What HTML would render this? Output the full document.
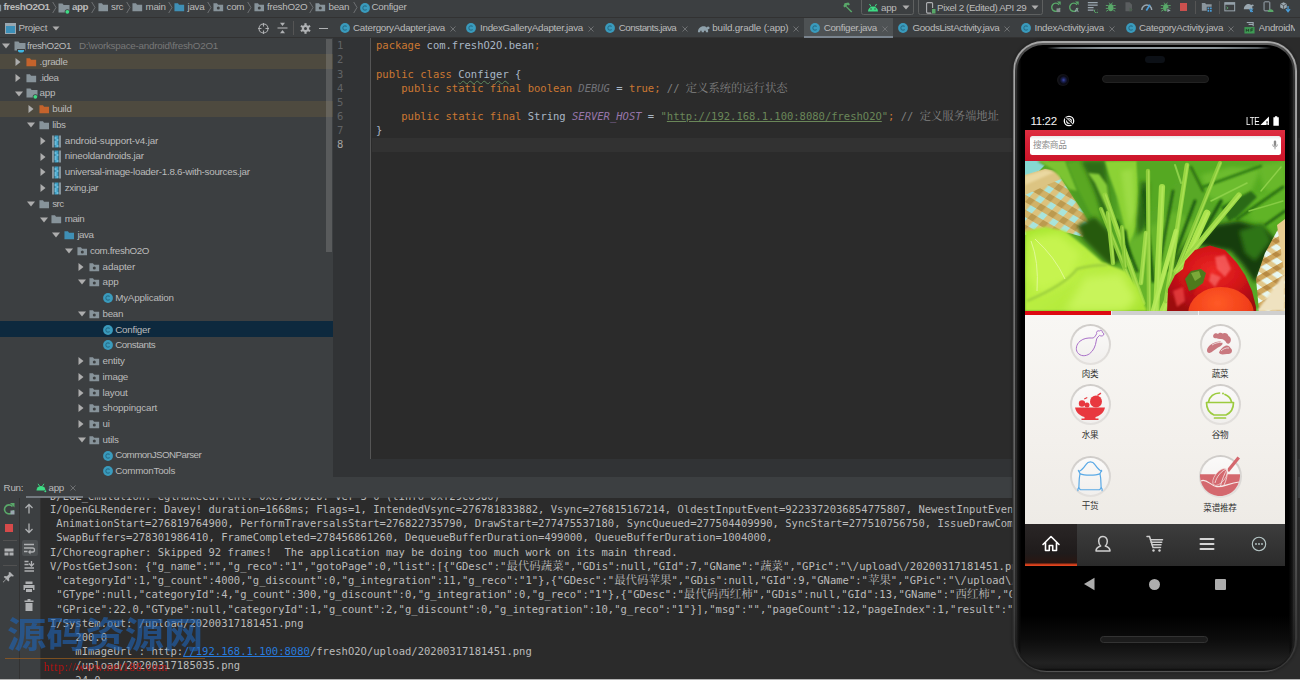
<!DOCTYPE html><html><head><meta charset="utf-8"><title>freshO2O1</title><style>
*{box-sizing:border-box;margin:0;padding:0}
html,body{width:1300px;height:680px;overflow:hidden;background:#3c3f41}
body{position:relative;font-family:"Liberation Sans","Noto Sans CJK SC",sans-serif;font-size:9.8px;letter-spacing:-.27px;color:#bbbbbb}
.abs{position:absolute}
.t{position:absolute;white-space:pre;line-height:16px;height:16px}
.mono{font-family:"DejaVu Sans Mono","Noto Sans CJK SC",monospace;font-size:10.5px;letter-spacing:0}
.row{position:absolute;left:0;width:333px;height:15.74px}
.k{color:#cc7832}.s{color:#6a8759}.c{color:#808080}.f{color:#9876aa;font-style:italic}.n{color:#a9b7c6}
.ln{position:absolute;left:337px;color:#606366;white-space:pre;line-height:14px;height:14px}
.cl{position:absolute;left:376px;color:#a9b7c6;white-space:pre;line-height:14px;height:14px}
.con{position:absolute;left:50px;color:#bbbbbb;white-space:pre;line-height:14px;height:14px;letter-spacing:.017px}
.con .cj{font-size:11.45px}
.lk{color:#287bde;text-decoration:underline}
.cj{font-family:"Noto Serif CJK SC","Noto Sans CJK SC",serif;font-size:11.3px;line-height:0}
</style></head><body>
<div class="abs" style="left:0;top:0;width:1300px;height:18px;background:#3c3f41;border-bottom:1px solid #323232"></div>
<div class="abs" style="left:0;top:18px;width:333px;height:20px;background:#3c3f41;border-bottom:1px solid #323232"></div>
<div class="abs" style="left:333px;top:18px;width:967px;height:20px;background:#3c3f41;border-bottom:1px solid #323232"></div>
<div class="abs" style="left:804px;top:18px;width:89px;height:19.500px;background:#4e5254;border-bottom:2.500px solid #7a848e"></div>
<div class="abs" style="left:0;top:38px;width:333px;height:440px;background:#3c3f41"></div>
<svg class="abs" style="left:-9px;top:2.4px" width="10.6" height="10.6" viewBox="0 0 12 12"><path d="M0.5 1.5h4l1.2 1.5h5.8v7.5h-11z" fill="#87939a"/></svg>
<div class="t" style="left:3.5px;top:-1px;font-weight:bold;letter-spacing:-.45px">freshO2O1</div>
<svg class="abs" style="left:51.5px;top:1px" width="5" height="13" viewBox="0 0 5 13"><path d="M.7 1l3.300 5.500L.7 12" fill="none" stroke="#6e7173" stroke-width="1"/></svg>
<svg class="abs" style="left:58px;top:1.5px" width="13" height="13" viewBox="0 0 13 13"><path d="M0.5 1.5h4l1.2 1.5h5.8v7.5h-11z" fill="#87939a"/><circle cx="9.3" cy="9.8" r="2.6" fill="#3c3f41"/><circle cx="9.3" cy="9.8" r="1.9" fill="#3ddc84"/></svg>
<div class="t" style="left:72px;top:-1px;font-weight:bold;letter-spacing:-.45px">app</div>
<svg class="abs" style="left:91px;top:1px" width="5" height="13" viewBox="0 0 5 13"><path d="M.7 1l3.300 5.500L.7 12" fill="none" stroke="#6e7173" stroke-width="1"/></svg>
<svg class="abs" style="left:97.5px;top:2.4px" width="10.6" height="10.6" viewBox="0 0 12 12"><path d="M0.5 1.5h4l1.2 1.5h5.8v7.5h-11z" fill="#87939a"/></svg>
<div class="t" style="left:111px;top:-1px">src</div>
<svg class="abs" style="left:126px;top:1px" width="5" height="13" viewBox="0 0 5 13"><path d="M.7 1l3.300 5.500L.7 12" fill="none" stroke="#6e7173" stroke-width="1"/></svg>
<svg class="abs" style="left:132px;top:2.4px" width="10.6" height="10.6" viewBox="0 0 12 12"><path d="M0.5 1.5h4l1.2 1.5h5.8v7.5h-11z" fill="#87939a"/></svg>
<div class="t" style="left:145.5px;top:-1px">main</div>
<svg class="abs" style="left:167.5px;top:1px" width="5" height="13" viewBox="0 0 5 13"><path d="M.7 1l3.300 5.500L.7 12" fill="none" stroke="#6e7173" stroke-width="1"/></svg>
<svg class="abs" style="left:174px;top:2.4px" width="10.6" height="10.6" viewBox="0 0 12 12"><path d="M0.5 1.5h4l1.2 1.5h5.8v7.5h-11z" fill="#3f8fb5"/></svg>
<div class="t" style="left:187.5px;top:-1px">java</div>
<svg class="abs" style="left:206.5px;top:1px" width="5" height="13" viewBox="0 0 5 13"><path d="M.7 1l3.300 5.500L.7 12" fill="none" stroke="#6e7173" stroke-width="1"/></svg>
<svg class="abs" style="left:213px;top:2.4px" width="10.6" height="10.6" viewBox="0 0 12 12"><path d="M0.5 1.5h4l1.2 1.5h5.8v7.5h-11z" fill="#87939a"/><circle cx="6" cy="6.8" r="1.7" fill="#3c3f41"/></svg>
<div class="t" style="left:226.5px;top:-1px">com</div>
<svg class="abs" style="left:247px;top:1px" width="5" height="13" viewBox="0 0 5 13"><path d="M.7 1l3.300 5.500L.7 12" fill="none" stroke="#6e7173" stroke-width="1"/></svg>
<svg class="abs" style="left:253.5px;top:2.4px" width="10.6" height="10.6" viewBox="0 0 12 12"><path d="M0.5 1.5h4l1.2 1.5h5.8v7.5h-11z" fill="#87939a"/><circle cx="6" cy="6.8" r="1.7" fill="#3c3f41"/></svg>
<div class="t" style="left:267px;top:-1px">freshO2O</div>
<svg class="abs" style="left:309px;top:1px" width="5" height="13" viewBox="0 0 5 13"><path d="M.7 1l3.300 5.500L.7 12" fill="none" stroke="#6e7173" stroke-width="1"/></svg>
<svg class="abs" style="left:315px;top:2.4px" width="10.6" height="10.6" viewBox="0 0 12 12"><path d="M0.5 1.5h4l1.2 1.5h5.8v7.5h-11z" fill="#87939a"/><circle cx="6" cy="6.8" r="1.7" fill="#3c3f41"/></svg>
<div class="t" style="left:328.5px;top:-1px">bean</div>
<svg class="abs" style="left:352.5px;top:1px" width="5" height="13" viewBox="0 0 5 13"><path d="M.7 1l3.300 5.500L.7 12" fill="none" stroke="#6e7173" stroke-width="1"/></svg>
<svg class="abs" style="left:358.5px;top:1.5px" width="12" height="12" viewBox="0 0 12 12"><circle cx="6" cy="6" r="4.900" fill="#3a9bbd"/><path d="M7.600 4.700A2.100 2.100 0 1 0 7.600 7.300" fill="none" stroke="#28708c" stroke-width="1.100"/></svg>
<div class="t" style="left:371.5px;top:-1px">Configer</div>
<svg class="abs" style="left:4.5px;top:22.500px" width="11" height="11" viewBox="0 0 11 11"><rect x=".5" y=".5" width="10" height="10" fill="#3b8fb8" stroke="#9aa7b0" stroke-width="1"/><rect x=".5" y=".5" width="10" height="2.500" fill="#9aa7b0"/></svg>
<div class="t" style="left:18.5px;top:19.500px">Project</div>
<svg class="abs" style="left:52px;top:26px" width="8" height="5" viewBox="0 0 8 5"><path d="M.5.5h7L4 4.500z" fill="#adadad"/></svg>
<svg class="abs" style="left:257.500px;top:22.500px" width="11" height="11" viewBox="0 0 11 11"><circle cx="5.500" cy="5.500" r="4.500" fill="none" stroke="#afb1b3" stroke-width="1.100"/><path d="M5.500 0v3.500M5.500 7.500V11M0 5.500h3.500M7.500 5.500H11" stroke="#afb1b3" stroke-width="1.100"/></svg>
<svg class="abs" style="left:276.500px;top:22px" width="11" height="12" viewBox="0 0 11 12"><path d="M.5 6h10" stroke="#afb1b3" stroke-width="1.100"/><path d="M3 .8h5L5.500 4z M3 11.200h5L5.500 8z" fill="#afb1b3"/></svg>
<div class="abs" style="left:293px;top:21px;width:1px;height:14px;background:#555"></div>
<svg class="abs" style="left:299.500px;top:22.500px" width="11" height="11" viewBox="-5.500 -5.500 11 11"><g fill="#afb1b3"><circle r="3.600"/><rect x="-1.100" y="-5.300" width="2.200" height="10.600"/><rect x="-1.100" y="-5.300" width="2.200" height="10.600" transform="rotate(60)"/><rect x="-1.100" y="-5.300" width="2.200" height="10.600" transform="rotate(120)"/></g><circle r="1.500" fill="#3c3f41"/></svg>
<div class="abs" style="left:318.500px;top:27.500px;width:9px;height:1.500px;background:#afb1b3"></div>
<svg class="abs" style="left:338.5px;top:22.3px" width="12" height="12" viewBox="0 0 12 12"><circle cx="6" cy="6" r="4.900" fill="#3a9bbd"/><path d="M7.600 4.700A2.100 2.100 0 1 0 7.600 7.300" fill="none" stroke="#28708c" stroke-width="1.100"/></svg>
<div class="t" style="left:353px;top:20.300px;letter-spacing:-0.26px">CatergoryAdapter.java</div>
<svg class="abs" style="left:450px;top:25.500px" width="6" height="6" viewBox="0 0 6 6"><path d="M.5.5l5 5M5.500.5l-5 5" stroke="#6e7072" stroke-width="1"/></svg>
<svg class="abs" style="left:464.5px;top:22.3px" width="12" height="12" viewBox="0 0 12 12"><circle cx="6" cy="6" r="4.900" fill="#3a9bbd"/><path d="M7.600 4.700A2.100 2.100 0 1 0 7.600 7.300" fill="none" stroke="#28708c" stroke-width="1.100"/></svg>
<div class="t" style="left:480px;top:20.300px;letter-spacing:-0.27px">IndexGalleryAdapter.java</div>
<svg class="abs" style="left:588px;top:25.500px" width="6" height="6" viewBox="0 0 6 6"><path d="M.5.5l5 5M5.500.5l-5 5" stroke="#6e7072" stroke-width="1"/></svg>
<svg class="abs" style="left:603.8px;top:22.3px" width="12" height="12" viewBox="0 0 12 12"><circle cx="6" cy="6" r="4.900" fill="#3a9bbd"/><path d="M7.600 4.700A2.100 2.100 0 1 0 7.600 7.300" fill="none" stroke="#28708c" stroke-width="1.100"/></svg>
<div class="t" style="left:618.7px;top:20.300px;letter-spacing:-0.52px">Constants.java</div>
<svg class="abs" style="left:682px;top:25.500px" width="6" height="6" viewBox="0 0 6 6"><path d="M.5.5l5 5M5.500.5l-5 5" stroke="#6e7072" stroke-width="1"/></svg>
<svg class="abs" style="left:696.8px;top:23.500px" width="13" height="10" viewBox="0 0 14 10"><path d="M1 8.500c0-4 2.500-6.500 6-6.500 1.500 0 2.500.5 3.500 1.500.5-1.500 2.500-1.500 3 0 .3 1.500-1 2-2 1.500.5 1 .5 2.500.5 3.500h-2.500v-1.500h-2v1.500h-2.500v-1.500h-1.500v1.500z" fill="#8fa1ab"/></svg>
<div class="t" style="left:712.3px;top:20.300px;letter-spacing:-0.15px">build.gradle (:app)</div>
<svg class="abs" style="left:793px;top:25.500px" width="6" height="6" viewBox="0 0 6 6"><path d="M.5.5l5 5M5.500.5l-5 5" stroke="#6e7072" stroke-width="1"/></svg>
<svg class="abs" style="left:808.7px;top:22.3px" width="12" height="12" viewBox="0 0 12 12"><circle cx="6" cy="6" r="4.900" fill="#3a9bbd"/><path d="M7.600 4.700A2.100 2.100 0 1 0 7.600 7.300" fill="none" stroke="#28708c" stroke-width="1.100"/></svg>
<div class="t" style="left:823.7px;top:20.300px;letter-spacing:-0.30px">Configer.java</div>
<svg class="abs" style="left:881.9px;top:25.500px" width="6" height="6" viewBox="0 0 6 6"><path d="M.5.5l5 5M5.500.5l-5 5" stroke="#6e7072" stroke-width="1"/></svg>
<svg class="abs" style="left:897.3px;top:22.3px" width="12" height="12" viewBox="0 0 12 12"><circle cx="6" cy="6" r="4.900" fill="#3a9bbd"/><path d="M7.600 4.700A2.100 2.100 0 1 0 7.600 7.300" fill="none" stroke="#28708c" stroke-width="1.100"/></svg>
<div class="t" style="left:912.5px;top:20.300px;letter-spacing:-0.38px">GoodsListActivity.java</div>
<svg class="abs" style="left:1004.4px;top:25.500px" width="6" height="6" viewBox="0 0 6 6"><path d="M.5.5l5 5M5.500.5l-5 5" stroke="#6e7072" stroke-width="1"/></svg>
<svg class="abs" style="left:1020px;top:22.3px" width="12" height="12" viewBox="0 0 12 12"><circle cx="6" cy="6" r="4.900" fill="#3a9bbd"/><path d="M7.600 4.700A2.100 2.100 0 1 0 7.600 7.300" fill="none" stroke="#28708c" stroke-width="1.100"/></svg>
<div class="t" style="left:1034.6px;top:20.300px;letter-spacing:-0.32px">IndexActivity.java</div>
<svg class="abs" style="left:1109px;top:25.500px" width="6" height="6" viewBox="0 0 6 6"><path d="M.5.5l5 5M5.500.5l-5 5" stroke="#6e7072" stroke-width="1"/></svg>
<svg class="abs" style="left:1124.9px;top:22.3px" width="12" height="12" viewBox="0 0 12 12"><circle cx="6" cy="6" r="4.900" fill="#3a9bbd"/><path d="M7.600 4.700A2.100 2.100 0 1 0 7.600 7.300" fill="none" stroke="#28708c" stroke-width="1.100"/></svg>
<div class="t" style="left:1139px;top:20.300px;letter-spacing:-0.32px">CategoryActivity.java</div>
<svg class="abs" style="left:1227.8px;top:25.500px" width="6" height="6" viewBox="0 0 6 6"><path d="M.5.5l5 5M5.500.5l-5 5" stroke="#6e7072" stroke-width="1"/></svg>
<svg class="abs" style="left:1243.8px;top:22px" width="11" height="12" viewBox="0 0 12 13"><path d="M3 .5h7v4M5 2.500h5" stroke="#9aa7b0" stroke-width="1.200" fill="none"/><rect x=".5" y="5.500" width="11" height="7" fill="#3e9a54"/><path d="M2.500 7.500v3M2.500 9h2.500M5 7.500v3M7.500 10.500v-3h2.500M7.500 9h2" stroke="#1e3a24" stroke-width=".9" fill="none"/></svg>
<div class="t" style="left:1258.5px;top:20.300px;width:36.5px;overflow:hidden;letter-spacing:-0.30px">AndroidManifest.xml</div>
<svg class="abs" style="left:842px;top:1.500px" width="12" height="11" viewBox="0 0 14 14"><path d="M2.500 1.500l5-1 2 2.500-1.500 1.500-1.500-1L5 5l7.500 7-1.500 1.500L4 6 2.500 7 1 5l1-1.500z" fill="#59a869"/></svg>
<div class="abs" style="left:861px;top:-4px;width:53px;height:19px;border:1px solid #5e6060;border-radius:2.500px"></div>
<svg class="abs" style="left:867px;top:3px" width="12" height="10" viewBox="0 0 12 10"><path d="M1 8.500a5 5 0 0 1 10 0z" fill="#3ddc84"/><path d="M2.500 1l1.500 2.500M9.500 1L8 3.500" stroke="#3ddc84" stroke-width="1"/><circle cx="4" cy="6" r=".7" fill="#3c3f41"/><circle cx="8" cy="6" r=".7" fill="#3c3f41"/></svg>
<div class="t" style="left:881px;top:-.5px">app</div>
<svg class="abs" style="left:901.500px;top:5px" width="8" height="5" viewBox="0 0 8 5"><path d="M.5.5h7L4 4.500z" fill="#adadad"/></svg>
<div class="abs" style="left:918px;top:-4px;width:125px;height:19px;border:1px solid #5e6060;border-radius:2.500px"></div>
<svg class="abs" style="left:925.500px;top:2px" width="10" height="12" viewBox="0 0 10 12"><rect x=".6" y=".6" width="6" height="10.500" rx="1" fill="none" stroke="#afb1b3" stroke-width="1.100"/><rect x="5" y="6" width="4.500" height="5.500" fill="#3c3f41"/><rect x="6" y="7" width="3.500" height="4.500" fill="#59a869"/></svg>
<div class="t" style="left:937px;top:-.5px;letter-spacing:-0.38px">Pixel 2 (Edited) API 29</div>
<svg class="abs" style="left:1031px;top:5px" width="8" height="5" viewBox="0 0 8 5"><path d="M.5.5h7L4 4.500z" fill="#adadad"/></svg>
<svg class="abs" style="left:1049.85px;top:1.300px" width="11.5" height="11.5" viewBox="-7 -7 14 14"><path d="M4-2.500A5 5 0 1 0 5 1.500" fill="none" stroke="#59a869" stroke-width="1.700"/><path d="M1.500-6.500h4.500v4.500z" fill="#59a869"/><rect x="1" y="2" width="4.500" height="4.500" fill="#8a8f92"/></svg>
<svg class="abs" style="left:1068.25px;top:1.300px" width="11.5" height="11.5" viewBox="-7 -7 14 14"><path d="M4-2.500A5 5 0 1 0 5 1.500" fill="none" stroke="#59a869" stroke-width="1.700"/><path d="M1.500-6.500h4.500v4.500z" fill="#59a869"/><path d="M1.500 6.500l2-5 2 5M2.300 5h2.400" stroke="#9aa7b0" stroke-width="1" fill="none"/></svg>
<svg class="abs" style="left:1086.85px;top:1.300px" width="11.5" height="11.5" viewBox="-7 -7 14 14"><path d="M-6-5h12M-6-2h12M-6 1h7M-6 4h7" stroke="#9aa7b0" stroke-width="1.500"/><path d="M2.500 3.500a2.500 2.500 0 1 0 4 0" fill="none" stroke="#59a869" stroke-width="1.200"/></svg>
<svg class="abs" style="left:1104.65px;top:1.300px" width="11.5" height="11.5" viewBox="-7 -7 14 14"><ellipse cx="0" cy="1" rx="3.300" ry="4.500" fill="#59a869"/><path d="M-2-5l1.500 2M2-5L.5-3M-6-1.500h3M6-1.500H3M-6 2h3M6 2H3M-5.500 5.500l2.500-1.500M5.500 5.500L3 4" stroke="#59a869" stroke-width="1.100"/></svg>
<svg class="abs" style="left:1122.85px;top:1.300px" width="11.5" height="11.5" viewBox="-7 -7 14 14"><path d="M-4-5.500h5l3 3V5.500h-8z" fill="#5a5d5f"/><path d="M1 1l4 2.500-4 2.500z" fill="#4a5e4e"/></svg>
<svg class="abs" style="left:1141.25px;top:1.300px" width="11.5" height="11.5" viewBox="-7 -7 14 14"><path d="M-6 4a6 6 0 1 1 12 0" fill="none" stroke="#9aa7b0" stroke-width="1.800"/><path d="M-.5 4.500L4-2.500" stroke="#4a9eda" stroke-width="2"/></svg>
<svg class="abs" style="left:1160.25px;top:1.300px" width="11.5" height="11.5" viewBox="-7 -7 14 14"><ellipse cx="0" cy="1" rx="3.300" ry="4.500" fill="#59a869"/><path d="M-2-5l1.500 2M2-5L.5-3M-6-1.500h3M6-1.500H3M-6 2h3M6 2H3M-5.500 5.500l2.500-1.500M5.500 5.500L3 4" stroke="#59a869" stroke-width="1.100"/><path d="M1 2h5v4.500h-5z" fill="#3c3f41"/><path d="M2 2.500l4 2-4 2z" fill="#9aa7b0"/></svg>
<div class="abs" style="left:1179.800px;top:3px;width:7.600px;height:7.600px;background:#c9504e"></div>
<div class="abs" style="left:1195px;top:1px;width:1px;height:13px;background:#555"></div>
<svg class="abs" style="left:1201.25px;top:1.300px" width="11.5" height="11.5" viewBox="-7 -7 14 14"><path d="M-6-4.500h4l1.200 1.500h6.800v8h-12z" fill="#8a959c"/><rect x="0" y="0" width="6.500" height="6" fill="#3c3f41"/><path d="M1 1h2v2h-2zM4 1h2v2h-2zM1 4h2v2h-2zM4 4h2v2h-2z" fill="#4a9eda"/></svg>
<div class="abs" style="left:1218.500px;top:1px;width:1px;height:13px;background:#555"></div>
<svg class="abs" style="left:1224.25px;top:1.300px" width="11.5" height="11.5" viewBox="-7 -7 14 14"><rect x="-6" y="-5" width="12" height="10" fill="none" stroke="#9aa7b0" stroke-width="1.200"/><path d="M-6-3.500h12" stroke="#9aa7b0" stroke-width="2"/><path d="M-4 0l2 1.500-2 1.500" fill="none" stroke="#59a869" stroke-width="1"/></svg>
<svg class="abs" style="left:1243.25px;top:1.300px" width="11.5" height="11.5" viewBox="-7 -7 14 14"><path d="M-6 3c0-4 3-6.500 6-6.500 1 0 2 .5 3 1.500.5-1 2.500-1 3 0 .3 1.500-1 2-2 1.500.5 1 .5 2.500.5 3.500z" fill="#9aa7b0"/><path d="M2 6.500l3-4.500M5 6.500l-3-4.500" stroke="#4a9eda" stroke-width="1.200"/><path d="M1 3l2.500 3.500" stroke="#4a9eda" stroke-width="1.400"/></svg>
<svg class="abs" style="left:1262.25px;top:1.300px" width="11.5" height="11.5" viewBox="-7 -7 14 14"><rect x="-4.500" y="-6" width="7" height="11" rx="1" fill="none" stroke="#9aa7b0" stroke-width="1.200"/><path d="M0 6.500a3.500 3.500 0 0 1 7 0z" fill="#59a869"/></svg>
<svg class="abs" style="left:1279.25px;top:1.300px" width="11.5" height="11.5" viewBox="-7 -7 14 14"><path d="M-5.500-3.500l4-2 4 2v4.500l-4 2-4-2z" fill="#9aa7b0"/><path d="M-1.500-1.500v5M-5.500-3.500l4 2 4-2" stroke="#3c3f41" stroke-width=".8" fill="none"/><path d="M4-1v6M1.500 3l2.500 3 2.500-3" stroke="#4a9eda" stroke-width="1.500" fill="none"/></svg>
<svg class="abs" style="left:1.0px;top:42.37px" width="10" height="8" viewBox="0 0 10 8"><path d="M1 1.500h8l-4 5z" fill="#adadad"/></svg>
<svg class="abs" style="left:13.5px;top:40.269999999999996px" width="14" height="14" viewBox="0 0 14 14"><path d="M0.5 1.5h4l1.2 1.5h5.8v7.5h-11z" fill="#87939a"/><path d="M3 9h8v1.5a2.5 2.5 0 0 1-2.5 2.5h-3a2.5 2.5 0 0 1-2.5-2.500z" fill="#3c3f41"/><path d="M4 10h6v.8a1.8 1.800 0 0 1-1.800 1.800h-2.400a1.800 1.800 0 0 1-1.800-1.800z" fill="#40b6e0"/></svg>
<div class="t" style="left:27.0px;top:38.2px;color:#bbbbbb;letter-spacing:-0.44px">freshO2O1</div>
<div class="t" style="left:79px;top:38.2px;color:#787878;letter-spacing:-0.23px">D:\workspace-android\freshO2O1</div>
<div class="row" style="top:53.7px;background:#4e4a3f"></div>
<svg class="abs" style="left:14.1px;top:57.11px" width="8" height="10" viewBox="0 0 8 10"><path d="M1.500 1l5 4-5 4z" fill="#adadad"/></svg>
<svg class="abs" style="left:26.1px;top:56.91px" width="10.6" height="10.6" viewBox="0 0 12 12"><path d="M0.5 1.5h4l1.2 1.5h5.8v7.5h-11z" fill="#c4632c"/></svg>
<div class="t" style="left:39.6px;top:53.9px;color:#bbbbbb;letter-spacing:-0.28px">.gradle</div>
<svg class="abs" style="left:14.1px;top:72.85000000000001px" width="8" height="10" viewBox="0 0 8 10"><path d="M1.500 1l5 4-5 4z" fill="#adadad"/></svg>
<svg class="abs" style="left:26.1px;top:72.65000000000002px" width="10.6" height="10.6" viewBox="0 0 12 12"><path d="M0.5 1.5h4l1.2 1.5h5.8v7.5h-11z" fill="#87939a"/></svg>
<div class="t" style="left:39.6px;top:69.7px;color:#bbbbbb;letter-spacing:-0.45px">.idea</div>
<svg class="abs" style="left:13.6px;top:89.59px" width="10" height="8" viewBox="0 0 10 8"><path d="M1 1.500h8l-4 5z" fill="#adadad"/></svg>
<svg class="abs" style="left:26.1px;top:87.49000000000001px" width="13" height="13" viewBox="0 0 13 13"><path d="M0.5 1.5h4l1.2 1.5h5.8v7.5h-11z" fill="#87939a"/><circle cx="9.3" cy="9.8" r="2.6" fill="#3c3f41"/><circle cx="9.3" cy="9.8" r="1.9" fill="#3ddc84"/></svg>
<div class="t" style="left:39.6px;top:85.4px;color:#bbbbbb;letter-spacing:-0.28px">app</div>
<div class="row" style="top:101.0px;background:#4e4a3f"></div>
<svg class="abs" style="left:26.7px;top:104.33000000000001px" width="8" height="10" viewBox="0 0 8 10"><path d="M1.500 1l5 4-5 4z" fill="#adadad"/></svg>
<svg class="abs" style="left:38.7px;top:104.13000000000002px" width="10.6" height="10.6" viewBox="0 0 12 12"><path d="M0.5 1.5h4l1.2 1.5h5.8v7.5h-11z" fill="#c4632c"/></svg>
<div class="t" style="left:52.2px;top:101.1px;color:#bbbbbb;letter-spacing:-0.24px">build</div>
<svg class="abs" style="left:26.2px;top:121.07000000000001px" width="10" height="8" viewBox="0 0 10 8"><path d="M1 1.500h8l-4 5z" fill="#adadad"/></svg>
<svg class="abs" style="left:38.7px;top:119.87000000000002px" width="10.6" height="10.6" viewBox="0 0 12 12"><path d="M0.5 1.5h4l1.2 1.5h5.8v7.5h-11z" fill="#87939a"/></svg>
<div class="t" style="left:52.2px;top:116.9px;color:#bbbbbb;letter-spacing:-0.30px">libs</div>
<svg class="abs" style="left:39.3px;top:135.81px" width="8" height="10" viewBox="0 0 8 10"><path d="M1.500 1l5 4-5 4z" fill="#adadad"/></svg>
<svg class="abs" style="left:51.3px;top:134.71px" width="12" height="13" viewBox="0 0 12 13"><rect x="1" y="0.500" width="2" height="12" fill="#87939a"/><rect x="8" y="0.500" width="2" height="12" fill="#87939a"/><rect x="3.500" y="0.500" width="4" height="12" fill="#3f9fc4"/><path d="M3.500 2h2v2h2v2h-2v2h-2v-2h2v-2h-2zM3.500 8h2v2h2v2h-2v-2h-2z" fill="#8fd3ee" opacity=".55"/></svg>
<div class="t" style="left:64.8px;top:132.6px;color:#bbbbbb;letter-spacing:-0.11px">android-support-v4.jar</div>
<svg class="abs" style="left:39.3px;top:151.55px" width="8" height="10" viewBox="0 0 8 10"><path d="M1.500 1l5 4-5 4z" fill="#adadad"/></svg>
<svg class="abs" style="left:51.3px;top:150.45000000000002px" width="12" height="13" viewBox="0 0 12 13"><rect x="1" y="0.500" width="2" height="12" fill="#87939a"/><rect x="8" y="0.500" width="2" height="12" fill="#87939a"/><rect x="3.500" y="0.500" width="4" height="12" fill="#3f9fc4"/><path d="M3.500 2h2v2h2v2h-2v2h-2v-2h2v-2h-2zM3.500 8h2v2h2v2h-2v-2h-2z" fill="#8fd3ee" opacity=".55"/></svg>
<div class="t" style="left:64.8px;top:148.4px;color:#bbbbbb;letter-spacing:-0.20px">nineoldandroids.jar</div>
<svg class="abs" style="left:39.3px;top:167.29000000000002px" width="8" height="10" viewBox="0 0 8 10"><path d="M1.500 1l5 4-5 4z" fill="#adadad"/></svg>
<svg class="abs" style="left:51.3px;top:166.19000000000003px" width="12" height="13" viewBox="0 0 12 13"><rect x="1" y="0.500" width="2" height="12" fill="#87939a"/><rect x="8" y="0.500" width="2" height="12" fill="#87939a"/><rect x="3.500" y="0.500" width="4" height="12" fill="#3f9fc4"/><path d="M3.500 2h2v2h2v2h-2v2h-2v-2h2v-2h-2zM3.500 8h2v2h2v2h-2v-2h-2z" fill="#8fd3ee" opacity=".55"/></svg>
<div class="t" style="left:64.8px;top:164.1px;color:#bbbbbb;letter-spacing:-0.26px">universal-image-loader-1.8.6-with-sources.jar</div>
<svg class="abs" style="left:39.3px;top:183.03px" width="8" height="10" viewBox="0 0 8 10"><path d="M1.500 1l5 4-5 4z" fill="#adadad"/></svg>
<svg class="abs" style="left:51.3px;top:181.93px" width="12" height="13" viewBox="0 0 12 13"><rect x="1" y="0.500" width="2" height="12" fill="#87939a"/><rect x="8" y="0.500" width="2" height="12" fill="#87939a"/><rect x="3.500" y="0.500" width="4" height="12" fill="#3f9fc4"/><path d="M3.500 2h2v2h2v2h-2v2h-2v-2h2v-2h-2zM3.500 8h2v2h2v2h-2v-2h-2z" fill="#8fd3ee" opacity=".55"/></svg>
<div class="t" style="left:64.8px;top:179.8px;color:#bbbbbb;letter-spacing:-0.33px">zxing.jar</div>
<svg class="abs" style="left:26.2px;top:199.77px" width="10" height="8" viewBox="0 0 10 8"><path d="M1 1.500h8l-4 5z" fill="#adadad"/></svg>
<svg class="abs" style="left:38.7px;top:198.57000000000002px" width="10.6" height="10.6" viewBox="0 0 12 12"><path d="M0.5 1.5h4l1.2 1.5h5.8v7.5h-11z" fill="#87939a"/></svg>
<div class="t" style="left:52.2px;top:195.6px;color:#bbbbbb;letter-spacing:-0.52px">src</div>
<svg class="abs" style="left:38.8px;top:215.51000000000002px" width="10" height="8" viewBox="0 0 10 8"><path d="M1 1.500h8l-4 5z" fill="#adadad"/></svg>
<svg class="abs" style="left:51.3px;top:214.31000000000003px" width="10.6" height="10.6" viewBox="0 0 12 12"><path d="M0.5 1.5h4l1.2 1.5h5.8v7.5h-11z" fill="#87939a"/></svg>
<div class="t" style="left:64.8px;top:211.3px;color:#bbbbbb;letter-spacing:-0.43px">main</div>
<svg class="abs" style="left:51.4px;top:231.25px" width="10" height="8" viewBox="0 0 10 8"><path d="M1 1.500h8l-4 5z" fill="#adadad"/></svg>
<svg class="abs" style="left:63.9px;top:230.05px" width="10.6" height="10.6" viewBox="0 0 12 12"><path d="M0.5 1.5h4l1.2 1.5h5.8v7.5h-11z" fill="#3f8fb5"/></svg>
<div class="t" style="left:77.4px;top:227.1px;color:#bbbbbb;letter-spacing:-0.49px">java</div>
<svg class="abs" style="left:64.0px;top:246.99px" width="10" height="8" viewBox="0 0 10 8"><path d="M1 1.500h8l-4 5z" fill="#adadad"/></svg>
<svg class="abs" style="left:76.5px;top:245.79000000000002px" width="10.6" height="10.6" viewBox="0 0 12 12"><path d="M0.5 1.5h4l1.2 1.5h5.8v7.5h-11z" fill="#87939a"/><circle cx="6" cy="6.8" r="1.7" fill="#3c3f41"/></svg>
<div class="t" style="left:90.0px;top:242.8px;color:#bbbbbb;letter-spacing:-0.39px">com.freshO2O</div>
<svg class="abs" style="left:77.1px;top:261.73px" width="8" height="10" viewBox="0 0 8 10"><path d="M1.500 1l5 4-5 4z" fill="#adadad"/></svg>
<svg class="abs" style="left:89.1px;top:261.53px" width="10.6" height="10.6" viewBox="0 0 12 12"><path d="M0.5 1.5h4l1.2 1.5h5.8v7.5h-11z" fill="#87939a"/><circle cx="6" cy="6.8" r="1.7" fill="#3c3f41"/></svg>
<div class="t" style="left:102.6px;top:258.5px;color:#bbbbbb;letter-spacing:-0.10px">adapter</div>
<svg class="abs" style="left:76.6px;top:278.47px" width="10" height="8" viewBox="0 0 10 8"><path d="M1 1.500h8l-4 5z" fill="#adadad"/></svg>
<svg class="abs" style="left:89.1px;top:277.27px" width="10.6" height="10.6" viewBox="0 0 12 12"><path d="M0.5 1.5h4l1.2 1.5h5.8v7.5h-11z" fill="#87939a"/><circle cx="6" cy="6.8" r="1.7" fill="#3c3f41"/></svg>
<div class="t" style="left:102.6px;top:274.3px;color:#bbbbbb;letter-spacing:-0.12px">app</div>
<svg class="abs" style="left:101.7px;top:292.11px" width="12" height="12" viewBox="0 0 12 12"><circle cx="6" cy="6" r="4.900" fill="#3a9bbd"/><path d="M7.600 4.700A2.100 2.100 0 1 0 7.600 7.300" fill="none" stroke="#28708c" stroke-width="1.100"/></svg>
<div class="t" style="left:115.2px;top:290.0px;color:#bbbbbb;letter-spacing:-0.19px">MyApplication</div>
<svg class="abs" style="left:76.6px;top:309.95px" width="10" height="8" viewBox="0 0 10 8"><path d="M1 1.500h8l-4 5z" fill="#adadad"/></svg>
<svg class="abs" style="left:89.1px;top:308.74999999999994px" width="10.6" height="10.6" viewBox="0 0 12 12"><path d="M0.5 1.5h4l1.2 1.5h5.8v7.5h-11z" fill="#87939a"/><circle cx="6" cy="6.8" r="1.7" fill="#3c3f41"/></svg>
<div class="t" style="left:102.6px;top:305.8px;color:#bbbbbb;letter-spacing:-0.32px">bean</div>
<div class="row" style="top:321.3px;background:#0d293e"></div>
<svg class="abs" style="left:101.7px;top:323.59px" width="12" height="12" viewBox="0 0 12 12"><circle cx="6" cy="6" r="4.900" fill="#3a9bbd"/><path d="M7.600 4.700A2.100 2.100 0 1 0 7.600 7.300" fill="none" stroke="#28708c" stroke-width="1.100"/></svg>
<div class="t" style="left:115.2px;top:321.5px;color:#bbbbbb;letter-spacing:-0.25px">Configer</div>
<svg class="abs" style="left:101.7px;top:339.33px" width="12" height="12" viewBox="0 0 12 12"><circle cx="6" cy="6" r="4.900" fill="#3a9bbd"/><path d="M7.600 4.700A2.100 2.100 0 1 0 7.600 7.300" fill="none" stroke="#28708c" stroke-width="1.100"/></svg>
<div class="t" style="left:115.2px;top:337.2px;color:#bbbbbb;letter-spacing:-0.46px">Constants</div>
<svg class="abs" style="left:77.1px;top:356.17px" width="8" height="10" viewBox="0 0 8 10"><path d="M1.500 1l5 4-5 4z" fill="#adadad"/></svg>
<svg class="abs" style="left:89.1px;top:355.96999999999997px" width="10.6" height="10.6" viewBox="0 0 12 12"><path d="M0.5 1.5h4l1.2 1.5h5.8v7.5h-11z" fill="#87939a"/><circle cx="6" cy="6.8" r="1.7" fill="#3c3f41"/></svg>
<div class="t" style="left:102.6px;top:353.0px;color:#bbbbbb;letter-spacing:-0.24px">entity</div>
<svg class="abs" style="left:77.1px;top:371.91px" width="8" height="10" viewBox="0 0 8 10"><path d="M1.500 1l5 4-5 4z" fill="#adadad"/></svg>
<svg class="abs" style="left:89.1px;top:371.71px" width="10.6" height="10.6" viewBox="0 0 12 12"><path d="M0.5 1.5h4l1.2 1.5h5.8v7.5h-11z" fill="#87939a"/><circle cx="6" cy="6.8" r="1.7" fill="#3c3f41"/></svg>
<div class="t" style="left:102.6px;top:368.7px;color:#bbbbbb;letter-spacing:-0.24px">image</div>
<svg class="abs" style="left:77.1px;top:387.65000000000003px" width="8" height="10" viewBox="0 0 8 10"><path d="M1.500 1l5 4-5 4z" fill="#adadad"/></svg>
<svg class="abs" style="left:89.1px;top:387.45px" width="10.6" height="10.6" viewBox="0 0 12 12"><path d="M0.5 1.5h4l1.2 1.5h5.8v7.5h-11z" fill="#87939a"/><circle cx="6" cy="6.8" r="1.7" fill="#3c3f41"/></svg>
<div class="t" style="left:102.6px;top:384.5px;color:#bbbbbb;letter-spacing:-0.19px">layout</div>
<svg class="abs" style="left:77.1px;top:403.39px" width="8" height="10" viewBox="0 0 8 10"><path d="M1.500 1l5 4-5 4z" fill="#adadad"/></svg>
<svg class="abs" style="left:89.1px;top:403.18999999999994px" width="10.6" height="10.6" viewBox="0 0 12 12"><path d="M0.5 1.5h4l1.2 1.5h5.8v7.5h-11z" fill="#87939a"/><circle cx="6" cy="6.8" r="1.7" fill="#3c3f41"/></svg>
<div class="t" style="left:102.6px;top:400.2px;color:#bbbbbb;letter-spacing:-0.13px">shoppingcart</div>
<svg class="abs" style="left:77.1px;top:419.13px" width="8" height="10" viewBox="0 0 8 10"><path d="M1.500 1l5 4-5 4z" fill="#adadad"/></svg>
<svg class="abs" style="left:89.1px;top:418.92999999999995px" width="10.6" height="10.6" viewBox="0 0 12 12"><path d="M0.5 1.5h4l1.2 1.5h5.8v7.5h-11z" fill="#87939a"/><circle cx="6" cy="6.8" r="1.7" fill="#3c3f41"/></svg>
<div class="t" style="left:102.6px;top:415.9px;color:#bbbbbb;letter-spacing:-0.31px">ui</div>
<svg class="abs" style="left:76.6px;top:435.87px" width="10" height="8" viewBox="0 0 10 8"><path d="M1 1.500h8l-4 5z" fill="#adadad"/></svg>
<svg class="abs" style="left:89.1px;top:434.66999999999996px" width="10.6" height="10.6" viewBox="0 0 12 12"><path d="M0.5 1.5h4l1.2 1.5h5.8v7.5h-11z" fill="#87939a"/><circle cx="6" cy="6.8" r="1.7" fill="#3c3f41"/></svg>
<div class="t" style="left:102.6px;top:431.7px;color:#bbbbbb;letter-spacing:-0.29px">utils</div>
<svg class="abs" style="left:101.7px;top:449.51px" width="12" height="12" viewBox="0 0 12 12"><circle cx="6" cy="6" r="4.900" fill="#3a9bbd"/><path d="M7.600 4.700A2.100 2.100 0 1 0 7.600 7.300" fill="none" stroke="#28708c" stroke-width="1.100"/></svg>
<div class="t" style="left:115.2px;top:447.4px;color:#bbbbbb;letter-spacing:-0.55px">CommonJSONParser</div>
<svg class="abs" style="left:101.7px;top:465.25px" width="12" height="12" viewBox="0 0 12 12"><circle cx="6" cy="6" r="4.900" fill="#3a9bbd"/><path d="M7.600 4.700A2.100 2.100 0 1 0 7.600 7.300" fill="none" stroke="#28708c" stroke-width="1.100"/></svg>
<div class="t" style="left:115.2px;top:463.2px;color:#bbbbbb;letter-spacing:-0.24px">CommonTools</div>
<div class="abs" style="left:326px;top:38.500px;width:6px;height:213.500px;background:rgba(166,166,166,.28)"></div>
<div class="abs" style="left:333px;top:38px;width:967px;height:420.500px;background:#2b2b2b"></div>
<div class="abs" style="left:333px;top:38px;width:38px;height:420.500px;background:#313335;border-right:1px solid #555555"></div>
<div class="abs" style="left:372px;top:137.500px;width:928px;height:14.500px;background:#323232"></div>
<div class="ln mono" style="top:38.0px;color:#606366">1</div>
<div class="cl mono" style="top:38.0px"><span class="k">package </span>com.freshO2O.bean<span class="k">;</span></div>
<div class="ln mono" style="top:52.0px;color:#606366">2</div>
<div class="ln mono" style="top:66.5px;color:#606366">3</div>
<div class="cl mono" style="top:66.5px"><span class="k">public class </span><span style="text-decoration:underline wavy #5e8a5e 1px;text-underline-offset:2px">Configer</span> {</div>
<div class="ln mono" style="top:80.5px;color:#606366">4</div>
<div class="cl mono" style="top:80.5px">    <span class="k">public static final boolean </span><span style="color:#72737a;font-style:italic">DEBUG</span> = <span class="k">true;</span> <span class="c">// <span class="cj">定义系统的运行状态</span></span></div>
<div class="ln mono" style="top:95.0px;color:#606366">5</div>
<div class="ln mono" style="top:109.0px;color:#606366">6</div>
<div class="cl mono" style="top:109.0px">    <span class="k">public static final </span>String <span class="f">SERVER_HOST</span> = <span class="s">"<span style="text-decoration:underline">http://192.168.1.100:8080/freshO2O</span>"</span><span class="k">;</span> <span class="c">// <span class="cj">定义服务端地址</span></span></div>
<div class="ln mono" style="top:123.0px;color:#606366">7</div>
<div class="cl mono" style="top:123.0px">}</div>
<div class="ln mono" style="top:137.0px;color:#a4a3a3">8</div>
<div class="abs" style="left:333px;top:458.500px;width:967px;height:18.500px;background:#313335"></div>
<div class="abs" style="left:0;top:477px;width:1300px;height:20px;background:#3c3f41"></div>
<div class="t" style="left:3.5px;top:480px;letter-spacing:-.2px">Run:</div>
<svg class="abs" style="left:35.500px;top:482.500px" width="11" height="10" viewBox="0 0 11 10"><path d="M.5 7.500a4.500 4.500 0 0 1 9 0z" fill="#3ddc84"/><path d="M2 .8l1.500 2.200M8 .8L6.500 3" stroke="#3ddc84" stroke-width=".9"/><circle cx="9.300" cy="8.300" r="1.400" fill="#3c3f41"/><circle cx="9.300" cy="8.300" r="1" fill="#3ddc84"/></svg>
<div class="t" style="left:48.5px;top:480px">app</div>
<svg class="abs" style="left:69.500px;top:485px" width="6" height="6" viewBox="0 0 6 6"><path d="M.5.5l5 5M5.500.5l-5 5" stroke="#6e7072" stroke-width="1"/></svg>
<div class="abs" style="left:26px;top:496px;width:57px;height:1.500px;background:#747a80"></div>
<div class="abs" style="left:0;top:497.500px;width:1300px;height:182.500px;background:#2b2b2b"></div>
<div class="abs" style="left:0;top:497.500px;width:19.500px;height:182.500px;background:#3c3f41;border-right:1px solid #323232"></div>
<div class="abs" style="left:19.500px;top:497.500px;width:21px;height:182.500px;background:#3c3f41;border-right:1px solid #323232"></div>
<svg class="abs" style="left:2.3000000000000007px;top:501.5px" width="14" height="14" viewBox="-7 -7 14 14"><path d="M3.500-2.500A4.500 4.500 0 1 0 4.500 1" fill="none" stroke="#59a869" stroke-width="1.600"/><path d="M1-6h4.500v4.500z" fill="#59a869"/><rect x="1.500" y="1.500" width="4" height="4" fill="#9aa7b0"/></svg>
<div class="abs" style="left:5.300px;top:523.500px;width:8px;height:8px;background:#d54a4a"></div>
<div class="abs" style="left:2.500px;top:539.500px;width:14px;height:1px;background:#515151"></div>
<svg class="abs" style="left:2.3000000000000007px;top:545px" width="14" height="14" viewBox="-7 -7 14 14"><rect x="-4.500" y="-3.500" width="9" height="3" fill="#afb1b3"/><rect x="-4.500" y=".5" width="4" height="3" fill="#afb1b3"/><rect x=".5" y=".5" width="4" height="3" fill="#afb1b3"/></svg>
<div class="abs" style="left:2.500px;top:564.500px;width:14px;height:1px;background:#515151"></div>
<svg class="abs" style="left:2.3000000000000007px;top:570px" width="14" height="14" viewBox="-7 -7 14 14"><path d="M1-5l4 4-1.200.6-1.800-.3-2 2 .3 2.200-1 1-2-2.300-3 3.300-.5-.5 3.200-3-2.300-2 1-1 2.200.3 2-2-.3-1.800z" fill="#afb1b3"/></svg>
<svg class="abs" style="left:22.4px;top:501.5px" width="14" height="14" viewBox="-7 -7 14 14"><path d="M0 4.500v-8.500M-3.500-1L0-4.500 3.500-1" fill="none" stroke="#afb1b3" stroke-width="1.300"/></svg>
<svg class="abs" style="left:22.4px;top:521px" width="14" height="14" viewBox="-7 -7 14 14"><path d="M0-4.500v8.500M-3.500 1L0 4.500 3.500 1" fill="none" stroke="#afb1b3" stroke-width="1.300"/></svg>
<div class="abs" style="left:22px;top:539.700px;width:15.500px;height:16px;border-radius:2px;background:#4c5052"></div>
<svg class="abs" style="left:22.4px;top:540.7px" width="14" height="14" viewBox="-7 -7 14 14"><path d="M-5-3.500h10M-5 0h8.500a2 2 0 0 1 0 4h-2.500M-5 3.500h3.500" fill="none" stroke="#afb1b3" stroke-width="1.300"/><path d="M1.500 1.500v5l-2.500-2.500z" fill="#afb1b3"/></svg>
<svg class="abs" style="left:22.4px;top:559px" width="14" height="14" viewBox="-7 -7 14 14"><path d="M-4.500-4.500h4M-4.500-1.500h4M2.500-5v5M0-2.500L2.500 0 5-2.500M-4.500 2h9.500M-4.500 5h9.500" fill="none" stroke="#afb1b3" stroke-width="1.300"/></svg>
<svg class="abs" style="left:22.4px;top:580px" width="14" height="14" viewBox="-7 -7 14 14"><rect x="-5.500" y="-2" width="11" height="5" fill="#afb1b3"/><rect x="-3.500" y="-5.500" width="7" height="2.500" fill="#afb1b3"/><rect x="-3.500" y="1.500" width="7" height="4" fill="#afb1b3" stroke="#3c3f41" stroke-width="1"/></svg>
<svg class="abs" style="left:22.4px;top:598px" width="14" height="14" viewBox="-7 -7 14 14"><path d="M-4.500-4.500h9v1.500h-9zM-1.500-6h3v1.500h-3zM-3.500-2h7v8h-7z" fill="#afb1b3"/></svg>
<div class="con mono" style="top:489px;clip-path:inset(8.500px 0 0 0)">D/EGL_emulation: eglMakeCurrent: 0xe7587620: ver 3 0 (tinfo 0xf29c0980)</div>
<div class="con mono" style="top:502.0px">I/OpenGLRenderer: Davey! duration=1668ms; Flags=1, IntendedVsync=276781833882, Vsync=276815167214, OldestInputEvent=9223372036854775807, NewestInputEvent=0, HandleInputStart=276</div>
<div class="con mono" style="top:516.2px"> AnimationStart=276819764900, PerformTraversalsStart=276822735790, DrawStart=277475537180, SyncQueued=277504409990, SyncStart=277510756750, IssueDrawCommandsStart=2775</div>
<div class="con mono" style="top:530.4px"> SwapBuffers=278301986410, FrameCompleted=278456861260, DequeueBufferDuration=499000, QueueBufferDuration=1004000,</div>
<div class="con mono" style="top:544.7px">I/Choreographer: Skipped 92 frames!  The application may be doing too much work on its main thread.</div>
<div class="con mono" style="top:558.9px">V/PostGetJson: {"g_name":"","g_reco":"1","gotoPage":0,"list":[{"GDesc":"<span class="cj">最代码蔬菜</span>","GDis":null,"GId":7,"GName":"<span class="cj">蔬菜</span>","GPic":"\/upload\/20200317181451.png","GPrice":5.0,</div>
<div class="con mono" style="top:573.1px"> "categoryId":1,"g_count":4000,"g_discount":0,"g_integration":11,"g_reco":"1"},{"GDesc":"<span class="cj">最代码苹果</span>","GDis":null,"GId":9,"GName":"<span class="cj">苹果</span>","GPic":"\/upload\/20200317182110.png",</div>
<div class="con mono" style="top:587.3px"> "GType":null,"categoryId":4,"g_count":300,"g_discount":0,"g_integration":0,"g_reco":"1"},{"GDesc":"<span class="cj">最代码西红柿</span>","GDis":null,"GId":13,"GName":"<span class="cj">西红柿</span>","GPic":"\/upload</div>
<div class="con mono" style="top:601.5px"> "GPrice":22.0,"GType":null,"categoryId":1,"g_count":2,"g_discount":0,"g_integration":10,"g_reco":"1"}],"msg":"","pageCount":12,"pageIndex":1,"result":"1","totalCount":12}</div>
<div class="con mono" style="top:615.8px">I/System.out: /upload/20200317181451.png</div>
<div class="con mono" style="top:630.0px">    200.0</div>
<div class="con mono" style="top:644.2px">    mImageUrl : http:<span class="lk">//192.168.1.100:8080</span>/freshO2O/upload/20200317181451.png</div>
<div class="con mono" style="top:658.4px">    /upload/20200317185035.png</div>
<div class="con mono" style="top:672.6px">    24.0</div>
<div class="abs" style="left:0;top:678.500px;width:1300px;height:1.500px;background:#b4b4b4"></div>
<div class="abs" style="left:6.500px;top:609.500px;font-size:36.500px;line-height:46px;font-weight:bold;letter-spacing:0;transform:scaleX(1.075);transform-origin:0 0;color:#1f63b4;opacity:.62;font-family:'Noto Sans CJK SC',sans-serif;white-space:pre">源码资源网</div>
<div class="abs" style="left:5px;top:657.500px;width:200px;height:1px;background:#a0601c;opacity:.7"></div>
<div class="abs" style="left:44px;top:660px;font-family:'Liberation Serif',serif;font-size:11.500px;line-height:15px;letter-spacing:.75px;color:#d01010;opacity:.85;white-space:pre">http://www.net188.com</div>
<div class="abs" style="left:1012.600px;top:40.700px;width:284.800px;height:631.600px;border-radius:30px 30px 34px 34px;box-shadow:0 0 0 .8px #2c2c2c,0 0 3px 1px rgba(0,0,0,.3);background:linear-gradient(90deg,rgba(30,30,30,.55) 0,rgba(30,30,30,0) 1.300px,rgba(30,30,30,0) 2.100px,rgba(30,30,30,.35) 2.900px,rgba(30,30,30,0) 3px,rgba(30,30,30,0) 281.800px,rgba(30,30,30,.35) 281.900px,rgba(30,30,30,0) 282.700px,rgba(30,30,30,0) 283.500px,rgba(30,30,30,.55) 284.800px),linear-gradient(180deg,#a8a8a8 0,#a2a2a2 15%,#8c8c8c 30%,#747474 42%,#686868 60%,#545454 80%,#3a3a3a 93%,#3a3a3a 99.5%,#585858 100%)"></div>
<div class="abs" style="left:1015.400px;top:43px;width:279.200px;height:627.800px;border-radius:27.500px 27.500px 31.500px 31.500px;background:linear-gradient(180deg,#5e5e5e 0,#484848 1.500%,#2e2e2e 6%,#282828 90%,#161616 100%)"></div>
<div class="abs" style="left:1017px;top:44.500px;width:276px;height:625.500px;border-radius:26px 26px 30px 30px;background:linear-gradient(90deg,#1a1a1a 0,#0c0c0c 2px,rgba(0,0,0,0) 4.500px,rgba(0,0,0,0) 271.500px,#0c0c0c 274px,#1a1a1a 276px),linear-gradient(180deg,#000 0,#000 571px,#0b0b0b 593px,#171717 607px,#222 618px,#1c1c1c 623px,#0a0a0a 625.500px)"></div>
<div class="abs" style="left:1047px;top:47.300px;width:224px;height:1.900px;border-radius:1px;background:linear-gradient(90deg,transparent,#5a6064 6%,#8a9398 25%,#929ba0 50%,#8a9398 75%,#5a6064 94%,transparent)"></div>
<div class="abs" style="left:1145px;top:55.500px;width:19.500px;height:7px;border-radius:4px;background:#0c1016"></div>
<div class="abs" style="left:1056.500px;top:73.500px;width:12px;height:12px;border-radius:6px;background:radial-gradient(circle at 55% 50%,#3a46a8 0,#1a2050 22%,#0a0a12 45%,#16161a 70%,#101010 100%)"></div>
<div class="abs" style="left:1102px;top:75px;width:107px;height:7.500px;border-radius:4px;background:#161616;border:1px solid #222"></div>
<div class="abs" style="left:1100px;top:635.500px;width:107.500px;height:7.500px;border-radius:4px;background:#1c1c1c;border:1px solid #333"></div>
<div class="abs" style="left:1030.500px;top:113.200px;color:#f4f4f4;font-size:11.500px;line-height:16px;letter-spacing:-.35px">11:22</div>
<svg class="abs" style="left:1063px;top:114.800px" width="12" height="12" viewBox="0 0 12 12"><circle cx="6" cy="6" r="4.700" fill="none" stroke="#fff" stroke-width="1.300"/><circle cx="6" cy="6" r="2.300" fill="none" stroke="#fff" stroke-width="1.100"/><path d="M2.300 2.600L9.700 9.600" stroke="#000" stroke-width="2.200"/><path d="M2.800 2.300L9.900 9" stroke="#fff" stroke-width="1"/></svg>
<div class="abs" style="left:1245.600px;top:114.600px;color:#fff;font-size:10.300px;line-height:13px;letter-spacing:-.3px;transform:scaleX(.78);transform-origin:0 0">LTE</div>
<svg class="abs" style="left:1259.600px;top:116.200px" width="9.400" height="9.400" viewBox="0 0 11 11"><path d="M10.500 .5V10.500H.5z" fill="#fff"/><path d="M7.600 6.200h1.300v2.400H7.600zM7.600 9.200h1.300v1.100H7.600z" fill="#000"/></svg>
<svg class="abs" style="left:1273.400px;top:115.700px" width="6.200" height="10" viewBox="0 0 8 12"><path d="M2.500 0h3v1.300H7.500V12H.5V1.300h2z" fill="#fff"/></svg>
<div class="abs" style="left:1025px;top:130px;width:260px;height:31px;background:linear-gradient(180deg,#de2d40 0,#d62036 40%,#cc1529 100%)"></div>
<div class="abs" style="left:1029.500px;top:135.500px;width:251.500px;height:19.500px;border-radius:2.500px;background:linear-gradient(180deg,#e8e8e8 0,#fff 4px,#fff 100%)"></div>
<div class="abs" style="left:1033px;top:138.500px;color:#8c8c8c;font-size:8.700px;line-height:13px;font-family:'Liberation Sans','Noto Sans CJK SC',sans-serif">搜索商品</div>
<svg class="abs" style="left:1271.500px;top:140px" width="6" height="10" viewBox="0 0 6 10"><rect x="1.800" y="0.500" width="2.400" height="5.500" rx="1.200" fill="#8a8a8a"/><path d="M.6 4.500a2.400 2.400 0 0 0 4.800 0M3 7v2.300" fill="none" stroke="#8a8a8a" stroke-width=".8"/></svg>
<svg class="abs" style="left:1025px;top:161px" width="260" height="150" viewBox="0 0 260 150">
<defs>
<filter id="b1" filterUnits="userSpaceOnUse" x="-10" y="-10" width="280" height="170"><feGaussianBlur stdDeviation="1"/></filter>
<filter id="b2" filterUnits="userSpaceOnUse" x="-10" y="-10" width="280" height="170"><feGaussianBlur stdDeviation="2.2"/></filter>
<filter id="b4" filterUnits="userSpaceOnUse" x="-10" y="-10" width="280" height="170"><feGaussianBlur stdDeviation="4"/></filter>
<filter id="b05" filterUnits="userSpaceOnUse" x="-10" y="-10" width="280" height="170"><feGaussianBlur stdDeviation="0.5"/></filter>
<pattern id="lat" width="13" height="13" patternUnits="userSpaceOnUse" patternTransform="rotate(30) skewX(-12) translate(2 3)"><rect width="13" height="13" fill="#a8e4dc"/><rect width="13" height="6.5" fill="#d0b268"/><rect width="6.5" height="13" fill="#dcc27c"/><rect width="6.5" height="6.5" fill="#bc9a50"/></pattern>
<pattern id="lat2" width="12" height="12" patternUnits="userSpaceOnUse" patternTransform="rotate(-30) skewX(25)"><rect width="12" height="12" fill="#e8f8f0"/><rect width="12" height="5.5" fill="#cfa65c"/><rect width="5.5" height="12" fill="#e2c88a"/><rect width="5.5" height="5.5" fill="#b88a42"/></pattern>
<radialGradient id="pep" cx="52%" cy="38%" r="65%"><stop offset="0" stop-color="#ee2a26"/><stop offset=".5" stop-color="#d41418"/><stop offset="1" stop-color="#9c0a10"/></radialGradient>
<radialGradient id="tom" cx="45%" cy="30%" r="75%"><stop offset="0" stop-color="#ff5a26"/><stop offset=".6" stop-color="#f2401a"/><stop offset="1" stop-color="#d83010"/></radialGradient>
<linearGradient id="cab" x1="0" y1="0" x2="1" y2="1"><stop offset="0" stop-color="#a6e62c"/><stop offset=".45" stop-color="#baee42"/><stop offset="1" stop-color="#aae432"/></linearGradient>
<clipPath id="pc"><rect width="260" height="150"/></clipPath>
</defs>
<g clip-path="url(#pc)">
<rect width="260" height="150" fill="#58a826"/>
<polygon points="0.0,0.0 24.0,0.0 14.0,10.0 0.0,16.0" fill="#86d8d2"/>
<polygon points="0.0,20.0 34.0,14.0 48.0,36.0 66.0,62.0 58.0,76.0 44.0,72.0 24.0,70.0 0.0,74.0" fill="url(#lat)" filter="url(#b05)"/>
<polygon points="0.0,14.0 20.0,8.0 34.0,10.0 36.0,18.0 22.0,24.0 0.0,34.0" fill="#dcc482" filter="url(#b05)"/>
<polygon points="0.0,15.0 20.0,9.0 30.0,11.0 0.0,24.0" fill="#ead8a0" filter="url(#b1)"/>
<polygon points="12.0,0.0 90.0,0.0 92.0,60.0 80.0,80.0 64.0,62.0 50.0,38.0 36.0,14.0" fill="#4e9c20" filter="url(#b1)"/>
<polygon points="14.0,0.0 40.0,0.0 52.0,30.0 44.0,28.0 30.0,10.0" fill="#7cc432" filter="url(#b1)"/>
<polygon points="42.0,2.0 58.0,0.0 70.0,30.0 78.0,70.0 64.0,50.0 52.0,26.0" fill="#5aa824" filter="url(#b1)"/>
<polygon points="56.0,0.0 80.0,0.0 84.0,40.0 80.0,60.0 72.0,36.0 62.0,12.0" fill="#2e6c14" filter="url(#b2)"/>
<polygon points="63.0,12.0 74.0,13.0 82.0,24.0 86.0,56.0 78.0,40.0 70.0,22.0" fill="#86cc38" filter="url(#b1)"/>
<polygon points="52.0,64.0 70.0,56.0 84.0,70.0 96.0,100.0 84.0,104.0 70.0,90.0 58.0,78.0" fill="#265a10" filter="url(#b2)"/>
<polygon points="80.0,0.0 112.0,0.0 114.0,30.0 112.0,62.0 104.0,88.0 98.0,60.0 92.0,36.0 84.0,14.0" fill="#8cd236" filter="url(#b1)"/>
<polygon points="96.0,10.0 108.0,8.0 110.0,50.0 104.0,70.0 100.0,40.0" fill="#9cdc44" filter="url(#b2)"/>
<polygon points="112.0,0.0 160.0,0.0 150.0,24.0 132.0,44.0 120.0,60.0 114.0,40.0" fill="#54a822" filter="url(#b1)"/>
<polygon points="116.0,20.0 124.0,22.0 122.0,60.0 114.0,84.0 112.0,60.0" fill="#2a6812" filter="url(#b2)"/>
<polygon points="160.0,0.0 260.0,0.0 260.0,60.0 236.0,76.0 214.0,66.0 190.0,44.0 176.0,24.0" fill="#56ac24" filter="url(#b1)"/>
<polygon points="176.0,14.0 206.0,6.0 236.0,8.0 226.0,30.0 200.0,42.0 184.0,36.0" fill="#6cbc2e" filter="url(#b2)"/>
<polygon points="232.0,4.0 260.0,0.0 260.0,34.0 240.0,30.0" fill="#68b82c" filter="url(#b2)"/>
<polygon points="222.0,36.0 260.0,28.0 260.0,56.0 240.0,66.0 226.0,58.0" fill="#60b428" filter="url(#b2)"/>
<polygon points="196.0,46.0 226.0,30.0 232.0,36.0 212.0,56.0 204.0,60.0" fill="#2a6a12" filter="url(#b1)"/>
<line x1="178" y1="26" x2="236" y2="5" stroke="#2f7a14" stroke-width="2.6" stroke-linecap="round" filter="url(#b1)"/>
<line x1="212" y1="58" x2="258" y2="26" stroke="#2c7212" stroke-width="3" stroke-linecap="round" filter="url(#b1)"/>
<line x1="186" y1="40" x2="222" y2="22" stroke="#8cd048" stroke-width="1.6" stroke-linecap="round" filter="url(#b05)"/>
<line x1="224" y1="50" x2="258" y2="40" stroke="#86cc44" stroke-width="1.4" stroke-linecap="round" filter="url(#b05)"/>
<line x1="236" y1="30" x2="256" y2="6" stroke="#8cd048" stroke-width="1.4" stroke-linecap="round" filter="url(#b05)"/>
<line x1="166" y1="6" x2="178" y2="30" stroke="#2a6c12" stroke-width="2.4" stroke-linecap="round" filter="url(#b1)"/>
<line x1="240" y1="64" x2="260" y2="50" stroke="#246210" stroke-width="2.6" stroke-linecap="round" filter="url(#b1)"/>
<line x1="150" y1="4" x2="156" y2="22" stroke="#8cd048" stroke-width="2" stroke-linecap="round" filter="url(#b05)"/>
<polygon points="170.0,84.0 190.0,64.0 214.0,60.0 240.0,68.0 252.0,80.0 240.0,104.0 230.0,122.0 218.0,104.0 206.0,90.0 186.0,86.0" fill="#153c0a" filter="url(#b2)"/>
<polygon points="214.0,70.0 238.0,62.0 246.0,80.0 230.0,100.0 220.0,92.0" fill="#2f7416" filter="url(#b2)"/>
<polygon points="104.0,80.0 150.0,50.0 176.0,66.0 160.0,100.0 144.0,150.0 118.0,150.0 106.0,110.0" fill="#66b42c" filter="url(#b2)"/>
<polygon points="150.0,96.0 166.0,74.0 174.0,78.0 160.0,110.0 148.0,128.0" fill="#2a6412" filter="url(#b2)"/>
<line x1="128" y1="120" x2="119" y2="30" stroke="#1f5a0e" stroke-width="3.5" stroke-linecap="round" filter="url(#b1)"/>
<line x1="112" y1="110" x2="92" y2="60" stroke="#1f5a0e" stroke-width="3" stroke-linecap="round" filter="url(#b1)"/>
<line x1="144" y1="110" x2="170" y2="40" stroke="#1f5a0e" stroke-width="3" stroke-linecap="round" filter="url(#b1)"/>
<line x1="150" y1="120" x2="196" y2="40" stroke="#1f5a0e" stroke-width="3.5" stroke-linecap="round" filter="url(#b1)"/>
<line x1="135" y1="100" x2="148" y2="30" stroke="#1f5a0e" stroke-width="2.5" stroke-linecap="round" filter="url(#b1)"/>
<line x1="104" y1="96" x2="100" y2="70" stroke="#1f5a0e" stroke-width="3" stroke-linecap="round" filter="url(#b1)"/>
<line x1="131" y1="152" x2="137" y2="26" stroke="#a2de48" stroke-width="6.2" stroke-linecap="round" filter="url(#b05)"/>
<line x1="131.6" y1="152" x2="137.6" y2="26" stroke="#c4f06a" stroke-width="1.8" stroke-linecap="round" opacity=".45" filter="url(#b05)"/>
<line x1="124" y1="152" x2="123" y2="10" stroke="#8ccc3a" stroke-width="4.3" stroke-linecap="round" filter="url(#b05)"/>
<line x1="124.6" y1="152" x2="123.6" y2="10" stroke="#c4f06a" stroke-width="1.3" stroke-linecap="round" opacity=".45" filter="url(#b05)"/>
<line x1="118" y1="142" x2="80" y2="34" stroke="#96d440" stroke-width="4.9" stroke-linecap="round" filter="url(#b05)"/>
<line x1="118.6" y1="142" x2="80.6" y2="34" stroke="#c4f06a" stroke-width="1.4" stroke-linecap="round" opacity=".45" filter="url(#b05)"/>
<line x1="108" y1="128" x2="76" y2="48" stroke="#86c838" stroke-width="4.1" stroke-linecap="round" filter="url(#b05)"/>
<line x1="108.6" y1="128" x2="76.6" y2="48" stroke="#c4f06a" stroke-width="1.2" stroke-linecap="round" opacity=".45" filter="url(#b05)"/>
<line x1="137" y1="152" x2="182" y2="52" stroke="#acE44e" stroke-width="6.8" stroke-linecap="round" filter="url(#b05)"/>
<line x1="137.6" y1="152" x2="182.6" y2="52" stroke="#c4f06a" stroke-width="2.0" stroke-linecap="round" opacity=".45" filter="url(#b05)"/>
<line x1="141" y1="140" x2="162" y2="4" stroke="#98d642" stroke-width="4.6" stroke-linecap="round" filter="url(#b05)"/>
<line x1="141.6" y1="140" x2="162.6" y2="4" stroke="#c4f06a" stroke-width="1.4" stroke-linecap="round" opacity=".45" filter="url(#b05)"/>
<line x1="143" y1="130" x2="195" y2="2" stroke="#8ccd3c" stroke-width="4.1" stroke-linecap="round" filter="url(#b05)"/>
<line x1="143.6" y1="130" x2="195.6" y2="2" stroke="#c4f06a" stroke-width="1.2" stroke-linecap="round" opacity=".45" filter="url(#b05)"/>
<line x1="151" y1="110" x2="214" y2="34" stroke="#9eda46" stroke-width="5.4" stroke-linecap="round" filter="url(#b05)"/>
<line x1="151.6" y1="110" x2="214.6" y2="34" stroke="#c4f06a" stroke-width="1.6" stroke-linecap="round" opacity=".45" filter="url(#b05)"/>
<line x1="100" y1="106" x2="97" y2="66" stroke="#84c636" stroke-width="4.1" stroke-linecap="round" filter="url(#b05)"/>
<line x1="100.6" y1="106" x2="97.6" y2="66" stroke="#c4f06a" stroke-width="1.2" stroke-linecap="round" opacity=".45" filter="url(#b05)"/>
<line x1="116" y1="122" x2="121" y2="72" stroke="#9cd846" stroke-width="4.3" stroke-linecap="round" filter="url(#b05)"/>
<line x1="116.6" y1="122" x2="121.6" y2="72" stroke="#c4f06a" stroke-width="1.3" stroke-linecap="round" opacity=".45" filter="url(#b05)"/>
<line x1="88" y1="102" x2="83" y2="52" stroke="#90ce3e" stroke-width="4.3" stroke-linecap="round" filter="url(#b05)"/>
<line x1="88.6" y1="102" x2="83.6" y2="52" stroke="#c4f06a" stroke-width="1.3" stroke-linecap="round" opacity=".45" filter="url(#b05)"/>
<line x1="148" y1="148" x2="174" y2="92" stroke="#98d442" stroke-width="5.9" stroke-linecap="round" filter="url(#b05)"/>
<line x1="148.6" y1="148" x2="174.6" y2="92" stroke="#c4f06a" stroke-width="1.8" stroke-linecap="round" opacity=".45" filter="url(#b05)"/>
<line x1="128" y1="150" x2="151" y2="70" stroke="#b0e654" stroke-width="4.6" stroke-linecap="round" filter="url(#b05)"/>
<line x1="128.6" y1="150" x2="151.6" y2="70" stroke="#c4f06a" stroke-width="1.4" stroke-linecap="round" opacity=".45" filter="url(#b05)"/>
<polygon points="231.0,118.0 240.0,92.0 252.0,70.0 260.0,62.0 260.0,150.0 234.0,150.0" fill="url(#lat2)" filter="url(#b05)"/>
<polygon points="252.0,64.0 260.0,58.0 260.0,118.0 256.0,90.0" fill="#e8cc90" filter="url(#b05)"/>
<polygon points="232.0,150.0 248.0,128.0 260.0,112.0 260.0,150.0" fill="#efe2c0" filter="url(#b1)"/>
<polygon points="0.0,70.0 20.0,66.0 40.0,70.0 60.0,86.0 77.0,101.0 100.0,110.0 112.0,126.0 122.0,150.0 0.0,150.0" fill="url(#cab)" filter="url(#b1)"/>
<polygon points="4.0,76.0 34.0,72.0 56.0,92.0 46.0,118.0 14.0,132.0 2.0,116.0" fill="#c6f450" filter="url(#b4)"/>
<polygon points="60.0,116.0 96.0,112.0 112.0,138.0 100.0,150.0 40.0,150.0" fill="#c8f45a" filter="url(#b4)"/>
<path d="M2,140 Q40,124 52,108 Q66,104 82,104" stroke="#9ed03e" stroke-width="2.500" fill="none" filter="url(#b1)"/>
<path d="M6,80 Q14,100 12,130M10,78 Q30,96 40,118" stroke="#e0f896" stroke-width="1" fill="none" filter="url(#b05)"/>
<polygon points="142.0,152.0 143.0,128.0 150.0,114.0 158.0,108.0 160.0,100.0 170.0,89.0 185.0,84.5 200.0,89.0 212.0,102.0 220.0,114.0 227.0,130.0 231.0,146.0 231.0,152.0" fill="url(#pep)" filter="url(#b05)"/>
<polygon points="190.0,96.0 200.0,94.0 206.0,108.0 200.0,116.0 192.0,108.0" fill="#ff7a78" opacity=".6" filter="url(#b1)"/>
<polygon points="186.0,112.0 196.0,116.0 190.0,126.0 184.0,120.0" fill="#ff8a86" opacity=".5" filter="url(#b1)"/>
<polygon points="148.0,130.0 158.0,126.0 160.0,140.0 152.0,146.0" fill="#f24a46" opacity=".7" filter="url(#b1)"/>
<polygon points="160.0,118.0 166.0,110.0 172.0,124.0 166.0,136.0" fill="#a80c12" opacity=".7" filter="url(#b1)"/>
<polygon points="160.0,118.0 166.0,110.0 176.0,108.0 181.0,112.0 178.0,122.0 170.0,128.0 164.0,130.0" fill="#4e7a1e" filter="url(#b05)"/>
<polygon points="166.0,112.0 174.0,110.0 176.0,116.0 170.0,120.0" fill="#7aa838" filter="url(#b05)"/>
<ellipse cx="196" cy="153" rx="33" ry="27" fill="url(#tom)" filter="url(#b05)"/>
</g></svg>
<div class="abs" style="left:1025px;top:311px;width:260px;height:3.500px;background:#cfcfcf"></div>
<div class="abs" style="left:1025px;top:311px;width:85.500px;height:3.500px;background:#dd0a12"></div>
<div class="abs" style="left:1110.500px;top:311px;width:1.500px;height:3.500px;background:#eee"></div>
<div class="abs" style="left:1197.500px;top:311px;width:1.500px;height:3.500px;background:#eee"></div>
<div class="abs" style="left:1025px;top:314.500px;width:260px;height:209.500px;background:linear-gradient(180deg,#f8f7f4 0,#f3f0ec 60%,#eeebe6 100%)"></div>
<div class="abs" style="left:1069.5px;top:323.5px;width:41px;height:41px;border-radius:50%;background:linear-gradient(180deg,#cfccc9,#e4e1de)"></div><div class="abs" style="left:1071.5px;top:325.5px;width:37px;height:37px;border-radius:50%;background:linear-gradient(180deg,#fbfaf9 0,#f1efed 100%)"></div>
<div class="abs" style="left:1050px;top:367.3px;width:80px;text-align:center;color:#333;font-size:8.600px;line-height:14px;font-family:'Liberation Sans','Noto Sans CJK SC',sans-serif">肉类</div>
<svg class="abs" style="left:1070.0px;top:324.0px" width="40" height="40" viewBox="-20 -20 40 40"><path d="M-12.500 8.500c-2.200-3.200-1.200-8.200 2.500-11.300 3.600-3 8.200-3.400 11.800-3.200 1.600.1 2.700-.6 3.600-2.100l1.300-2.200c-.8-1.900 1-3.600 2.600-2.700 1.100-1.400 3.400-.4 3.100 1.400 1.700.3 2 2.700.3 3.300-1 .5-2.300.3-3.100-.3l-1.700 1.600c-1.200 1.200-1.500 2.500-1.700 4.100-.6 4.600-2.600 9.600-6.600 12.600-3.900 2.900-9.300 2.800-12.100-1.200z" fill="none" stroke="#a96fc9" stroke-width="1" stroke-linejoin="round"/></svg>
<div class="abs" style="left:1199.5px;top:323.5px;width:41px;height:41px;border-radius:50%;background:linear-gradient(180deg,#cfccc9,#e4e1de)"></div><div class="abs" style="left:1201.5px;top:325.5px;width:37px;height:37px;border-radius:50%;background:linear-gradient(180deg,#fbfaf9 0,#f1efed 100%)"></div>
<div class="abs" style="left:1180px;top:367.3px;width:80px;text-align:center;color:#333;font-size:8.600px;line-height:14px;font-family:'Liberation Sans','Noto Sans CJK SC',sans-serif">蔬菜</div>
<svg class="abs" style="left:1200.0px;top:324.0px" width="40" height="40" viewBox="-20 -20 40 40"><g fill="#c9787f"><path d="M-6.500-6.500c-1.500-3.500 2.500-5.500 4.500-3.500 1-1.500 3.500-1.500 4.500-.5 2.500-1.500 5.500 0 6 2.500 2.500 1 3 4.500 1.500 6.500-1 1.500-2.500 1.500-3.500.5-1-2.500-3.500-4.500-6.500-4-2.500-.5-5 0-6.500-1.500z"/><path d="M-13 6.500c0-3.500 4-7 9-8.500 3-1 6-.5 6.500 1 .5 1.500-1.500 3-4.500 4.500-3.500 2-6 5-8.500 5.500-1.500.2-2.500-1-2.500-2.500z"/><path d="M-1 8.500c1-2.500 3.500-5.500 6-6.500 2.500-1 4.500 0 5.500 2 1.500 1 2 3 1 4.500-.8 1.200-2.500 1.500-4.500 1.500-3 0-6.500 1.500-8-1.500z"/></g><path d="M-8 1c3-2 7-3 10-2.500M1 7c2-2 5-3.500 8-3" fill="none" stroke="#f3efed" stroke-width=".8"/></svg>
<div class="abs" style="left:1069.5px;top:384.2px;width:41px;height:41px;border-radius:50%;background:linear-gradient(180deg,#cfccc9,#e4e1de)"></div><div class="abs" style="left:1071.5px;top:386.2px;width:37px;height:37px;border-radius:50%;background:linear-gradient(180deg,#fbfaf9 0,#f1efed 100%)"></div>
<div class="abs" style="left:1050px;top:428px;width:80px;text-align:center;color:#333;font-size:8.600px;line-height:14px;font-family:'Liberation Sans','Noto Sans CJK SC',sans-serif">水果</div>
<svg class="abs" style="left:1070.0px;top:384.7px" width="40" height="40" viewBox="-20 -20 40 40"><g fill="#e8383f"><path d="M-15 2.500h30c-1 5-5 8.500-9.500 9.500v1.500h3v1.500h-17v-1.500h3v-1.500c-4.500-1-8.500-4.500-9.500-9.500z"/><circle cx="6" cy="-3.500" r="6"/><path d="M7-10l3.500-2.500.8 1.200-3.500 2.300z"/><circle cx="-8" cy="-1.500" r="3.200"/><circle cx="-3" cy="0" r="2.500"/><path d="M-6-6.500l3-1.500.5 1-3 1.500z"/></g></svg>
<div class="abs" style="left:1199.5px;top:384.2px;width:41px;height:41px;border-radius:50%;background:linear-gradient(180deg,#cfccc9,#e4e1de)"></div><div class="abs" style="left:1201.5px;top:386.2px;width:37px;height:37px;border-radius:50%;background:linear-gradient(180deg,#fbfaf9 0,#f1efed 100%)"></div>
<div class="abs" style="left:1180px;top:428px;width:80px;text-align:center;color:#333;font-size:8.600px;line-height:14px;font-family:'Liberation Sans','Noto Sans CJK SC',sans-serif">谷物</div>
<svg class="abs" style="left:1200.0px;top:384.7px" width="40" height="40" viewBox="-20 -20 40 40"><g fill="none" stroke="#9ccb3f" stroke-width="1.700" stroke-linecap="round"><path d="M-13.500-2.500h27c0 6-3 10.500-7.500 12.500h-12c-4.500-2-7.500-6.500-7.500-12.500z" stroke-linejoin="round"/><path d="M-11.500-3c1-5.500 5.500-9 11-9M5-10.500c3.500 1.500 6 4.500 6.500 7.500"/><path d="M-5.500 13h11"/></g><circle cx="3" cy="-11.500" r="1" fill="#9ccb3f"/></svg>
<div class="abs" style="left:1069.5px;top:455.5px;width:41px;height:41px;border-radius:50%;background:linear-gradient(180deg,#cfccc9,#e4e1de)"></div><div class="abs" style="left:1071.5px;top:457.5px;width:37px;height:37px;border-radius:50%;background:linear-gradient(180deg,#fbfaf9 0,#f1efed 100%)"></div>
<div class="abs" style="left:1050px;top:499px;width:80px;text-align:center;color:#333;font-size:8.600px;line-height:14px;font-family:'Liberation Sans','Noto Sans CJK SC',sans-serif">干货</div>
<svg class="abs" style="left:1070.0px;top:456.0px" width="40" height="40" viewBox="-20 -20 40 40"><g transform="scale(.86) translate(0 -1)" fill="none" stroke="#5aa9e6" stroke-width="1.400" stroke-linejoin="round" stroke-linecap="round"><path d="M-12.500-4.500c3-1 5.500-4.500 8-8 1.500-2.500 3.500-3 5-3s3.500.5 5 3c2.500 3.500 5 7 8 8"/><path d="M-13.500-5.500l2 4c5 2 18 2 23 0l2-4"/><path d="M-11.500-1.500c-1.500 5-1 11-1.500 16 0 1.500 1 2 2 2.500h22c1-.5 2-1 2-2.500-.5-5 0-11-1.500-16"/><path d="M-13 14.500c-1 1-1.500 2.500-1 3.500M13 14.500c1 1 1.500 2.500 1 3.500"/></g></svg>
<div class="abs" style="left:1198.5px;top:454.5px;width:43px;height:43px;border-radius:50%;background:linear-gradient(180deg,#cfccc9,#e4e1de)"></div><div class="abs" style="left:1200.5px;top:456.5px;width:39px;height:39px;border-radius:50%;background:linear-gradient(180deg,#fbfaf9 0,#f1efed 100%)"></div>
<div class="abs" style="left:1180px;top:501px;width:80px;text-align:center;color:#333;font-size:8.600px;line-height:14px;font-family:'Liberation Sans','Noto Sans CJK SC',sans-serif">菜谱推荐</div>
<svg class="abs" style="left:1200.0px;top:456.0px" width="40" height="40" viewBox="-20 -20 40 40"><g><path d="M-20-.5h40c0 11-8.500 20.500-20 20.500s-20-9.500-20-20.500z" fill="#d4686e"/><path d="M-20-.5h40" stroke="#d4686e" stroke-width="2.500"/><path d="M-19 5c5-3 9 4 15 5.500 6 1.500 12-3 23-4.500" fill="none" stroke="#f6e9e8" stroke-width="1.200"/><path d="M17.500-19.500l2.500 2-11 13.500-2.500-2z" fill="#d4686e"/><ellipse cx="0" cy="1" rx="5" ry="10" transform="rotate(38 0 1)" fill="#d4686e" stroke="#f6e9e8" stroke-width=".6"/><path d="M7.500-7.500c-6 2-11 8-12.500 14.500M7.500-7.500c-3 5-5.500 11-7 17.500M7.500-7.500c0 6-1 12-3.500 16.500" fill="none" stroke="#f6e9e8" stroke-width=".8"/></g></svg>
<div class="abs" style="left:1025px;top:524px;width:260px;height:42px;background:linear-gradient(180deg,#3d3d3d 0,#343434 50%,#2b2b2b 100%)"></div>
<div class="abs" style="left:1025px;top:524px;width:51.500px;height:42px;background:linear-gradient(180deg,#2a2626 0,#1f1b1b 70%,#2a1612 92%,#d8401c 97%,#e8481f 100%)"></div>
<svg class="abs" style="left:1040.7px;top:534px" width="20" height="20" viewBox="-10 -10 20 20"><path d="M-8 0.500L0-7.500 8 .5M-5.500-1.500v8h3.800v-5h3.400v5h3.800v-8" fill="none" stroke="#fff" stroke-width="1.600" stroke-linejoin="round" stroke-linecap="round"/></svg>
<svg class="abs" style="left:1092.9px;top:534px" width="20" height="20" viewBox="-10 -10 20 20"><path d="M0-7.500c2.800 0 4.300 2.200 4.300 4.800 0 2-1 3.800-2 4.700 2.500.8 4.700 2 4.700 5h-14c0-3 2.200-4.200 4.700-5-1-.9-2-2.700-2-4.700 0-2.600 1.500-4.800 4.300-4.800z" fill="none" stroke="#d0d0d0" stroke-width="1.500" stroke-linejoin="round"/></svg>
<svg class="abs" style="left:1144.6px;top:534px" width="20" height="20" viewBox="-10 -10 20 20"><g fill="none" stroke="#cfcfcf" stroke-width="1.500" stroke-linecap="round"><path d="M-8-7.500h2.500l3.500 11h7.500"/><path d="M-4.500-4.200h12M-3.800-1.700h10.500M-3 .8h9"/></g><circle cx="-1.500" cy="6.500" r="1.200" fill="#cfcfcf"/><circle cx="4.500" cy="6.500" r="1.200" fill="#cfcfcf"/></svg>
<svg class="abs" style="left:1196.7px;top:534px" width="20" height="20" viewBox="-10 -10 20 20"><path d="M-6.500-5h13M-6.500 0h13M-6.500 5h13" stroke="#d4d4d4" stroke-width="2" stroke-linecap="round"/></svg>
<svg class="abs" style="left:1248.9px;top:533.5px" width="20" height="20" viewBox="-10 -10 20 20"><circle r="6.700" fill="none" stroke="#b8c8c8" stroke-width="1.100"/><circle cx="-3" r=".9" fill="#b8c8c8"/><circle r=".9" fill="#b8c8c8"/><circle cx="3" r=".9" fill="#b8c8c8"/></svg>
<svg class="abs" style="left:1083px;top:577px" width="13" height="14" viewBox="0 0 13 14"><path d="M11.500 .8V13.200L1 7z" fill="#adadad"/></svg>
<div class="abs" style="left:1149.300px;top:578.500px;width:11px;height:11px;border-radius:6px;background:#adadad"></div>
<div class="abs" style="left:1214.500px;top:578.500px;width:11px;height:11px;border-radius:1px;background:#adadad"></div>
</body></html>
